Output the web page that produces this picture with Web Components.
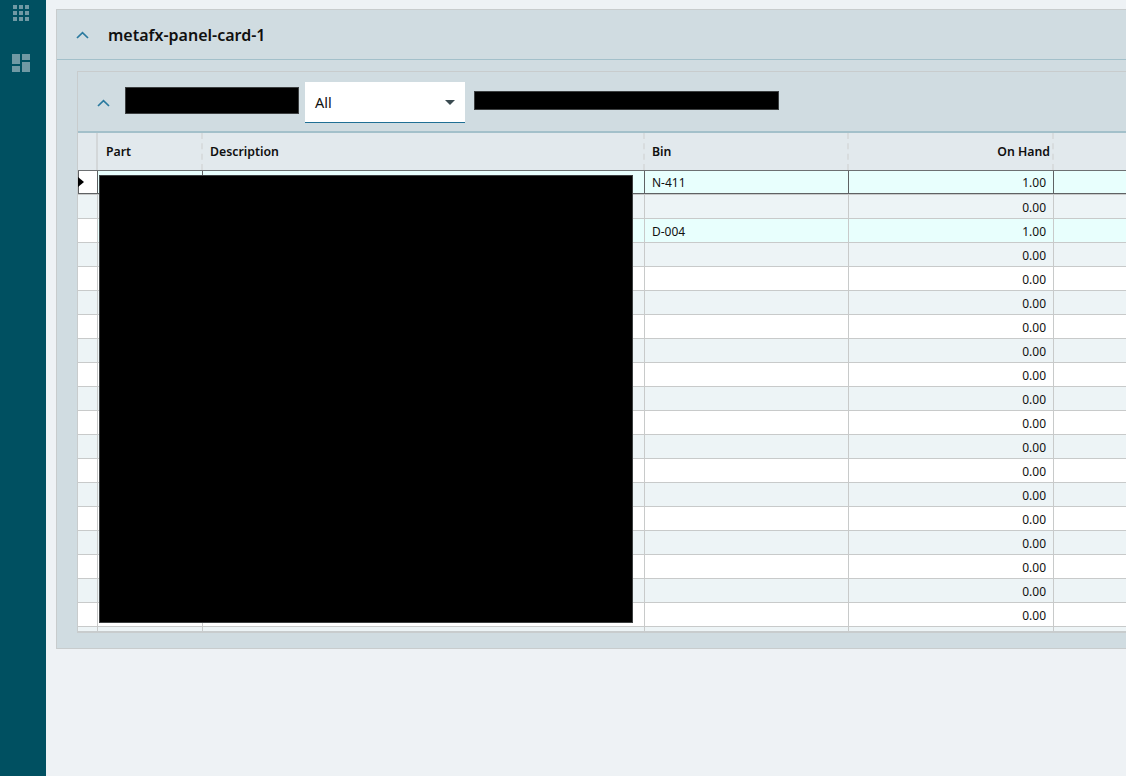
<!DOCTYPE html>
<html>
<head>
<meta charset="utf-8">
<title>metafx</title>
<style>
  html, body { margin: 0; height: 100%; overflow: hidden; background: #eef2f5; }
  body { font-family: "Noto Sans", sans-serif; color: #101010; }
</style>
</head>
<body>
<app-shell>
  <panel-card title="metafx-panel-card-1">
    <part-search>
      <part-grid></part-grid>
    </part-search>
  </panel-card>
</app-shell>

<script>
class AppShell extends HTMLElement {
  constructor() {
    super();
    this.attachShadow({ mode: "open" });
  }
  connectedCallback() {
    this.shadowRoot.innerHTML = `
    <style>
      :host { display: flex; width: 1126px; height: 776px; overflow: hidden; }
      nav { flex: none; width: 46px; background: #005061; padding: 5px 0 0 12px; box-sizing: border-box; }
      svg { display: block; fill: #7099a4; }
      .apps { margin-left: 1px; }
      .dash { margin-top: 33px; }
      main { flex: 1; min-width: 0; padding: 9px 0 0 10px; overflow: hidden; }
    </style>
    <nav>
      <svg class="apps" width="16" height="16" viewBox="0 0 16 16">
        <rect x="0" y="0" width="4" height="4"/><rect x="6" y="0" width="4" height="4"/><rect x="12" y="0" width="4" height="4"/>
        <rect x="0" y="6" width="4" height="4"/><rect x="6" y="6" width="4" height="4"/><rect x="12" y="6" width="4" height="4"/>
        <rect x="0" y="12" width="4" height="4"/><rect x="6" y="12" width="4" height="4"/><rect x="12" y="12" width="4" height="4"/>
      </svg>
      <svg class="dash" width="18" height="18" viewBox="0 0 18 18">
        <rect x="0" y="0" width="8" height="10"/><rect x="10" y="0" width="8" height="6"/>
        <rect x="0" y="12" width="8" height="6"/><rect x="10" y="8" width="8" height="10"/>
      </svg>
    </nav>
    <main><slot></slot></main>`;
  }
}

class PanelCard extends HTMLElement {
  constructor() {
    super();
    this.attachShadow({ mode: "open" });
  }
  connectedCallback() {
    this.shadowRoot.innerHTML = `
    <style>
      :host { display: block; width: 1200px; background: #d0dce1; border: 1px solid #c8cccd; box-sizing: border-box; }
      header { height: 49px; display: flex; align-items: center; border-bottom: 1px solid #a3c0ca; box-sizing: content-box; }
      svg { margin-left: 19px; width: 13px; height: 8px; fill: none; stroke: #2a7a9f; stroke-width: 1.7; }
      h2 { margin: 0 0 0 19px; font-size: 16px; font-weight: 600; }
      .body { padding: 11px 0 15px 20px; }
    </style>
    <header>
      <svg viewBox="0 0 13 8"><path d="M1 7 L6.5 1.6 L12 7"/></svg>
      <h2>${this.getAttribute("title")}</h2>
    </header>
    <div class="body"><slot></slot></div>`;
  }
}

class PartSearch extends HTMLElement {
  constructor() {
    super();
    this.attachShadow({ mode: "open" });
  }
  connectedCallback() {
    this.shadowRoot.innerHTML = `
    <style>
      :host { display: block; border: 1px solid #c8cccd; border-bottom-width: 2px; border-right: 0; }
      header { display: flex; align-items: center; border-bottom: 2px solid #a3c0ca; box-sizing: border-box; height: 61px; }
      svg { margin: 2px 0 0 19px; width: 13px; height: 8px; fill: none; stroke: #2a7a9f; stroke-width: 1.7; flex: none; }
      .mask { background: #000; flex: none; box-sizing: border-box; border: 1px solid #3c3f40; }
      .label { width: 174px; height: 27px; margin: -3px 0 0 15px; }
      .note { width: 305px; height: 19px; margin: -2px 0 0 9px; }
      .select { flex: none; width: 160px; height: 41px; margin: 2px 0 0 6px; background: #fff; border-bottom: 1px solid #1f6f94; box-sizing: border-box; display: flex; align-items: center; padding: 0 10px; justify-content: space-between; font-size: 14.5px; }
      .arrow { width: 0; height: 0; border-left: 5px solid transparent; border-right: 5px solid transparent; border-top: 5px solid #3a4a50; }
    </style>
    <header>
      <svg viewBox="0 0 13 8"><path d="M1 7 L6.5 1.6 L12 7"/></svg>
      <div class="mask label"></div>
      <div class="select"><span>All</span><span class="arrow"></span></div>
      <div class="mask note"></div>
    </header>
    <slot></slot>`;
  }
}

class PartGrid extends HTMLElement {
  constructor() {
    super();
    this.attachShadow({ mode: "open" });
  }
  getStyles() {
    return `
      :host { display: block; position: relative; height: 498px; overflow: hidden; font-size: 12px; background: #fff; }
      .row { display: grid; grid-template-columns: 20px 105px 442px 204px 205px 200px; box-sizing: border-box; }
      .cell { box-sizing: border-box; border-right: 1px solid #c8caca; padding: 0 7px; display: flex; align-items: center; white-space: nowrap; }
      .head { height: 38px; background: #e2e9ed; border-bottom: 1px solid #6d7072; font-weight: 600; font-size: 12.3px; }
      .head .cell { border-right: 2px dashed #d8dcde; }
      .head .cell:first-child { border-right: 2px solid #d3d7d9; }
      .head .cell:nth-child(2) { padding-left: 8px; }
      .data { height: 24px; border-bottom: 1px solid #c8caca; }
      .data .cell { padding-top: 1px; }
      .even { background: #edf4f6; }
      .odd { background: #fff; }
      .stock { background: #e8fffd; }
      .num { justify-content: flex-end; padding-right: 7px; }
      .head .num { padding-right: 2px; }
      .gutter { padding: 0; }
      .stock .gutter { background: #fff; }
      .current .cell { border-bottom: 1px solid #5f6264; border-right-color: #5f6264; }
      .current .cell:last-child { border-right-color: #c8caca; }
      .current .gutter { border-left: 1px solid #5f6264; position: relative; }
      .current .gutter::after { content: ""; position: absolute; left: -1px; top: 6px; border-left: 6px solid #000; border-top: 5px solid transparent; border-bottom: 5px solid transparent; }
      .redact { position: absolute; left: 21px; top: 42px; width: 534px; height: 448px; box-sizing: border-box; background: #000; border: 1px solid #3c3f40; }
    `;
  }
  row(i, bin, qty) {
    const cls = i === 0 ? "stock current" : qty > 0 ? "stock" : i % 2 ? "even" : "odd";
    return `
      <div class="row data ${cls}">
        <div class="cell gutter"></div>
        <div class="cell"></div>
        <div class="cell"></div>
        <div class="cell">${bin}</div>
        <div class="cell num">${qty.toFixed(2)}</div>
        <div class="cell"></div>
      </div>`;
  }
  connectedCallback() {
    const rows = [];
    for (let i = 0; i < 19; i++) {
      rows.push(this.row(i, i === 0 ? "N-411" : i === 2 ? "D-004" : "", i === 0 || i === 2 ? 1 : 0));
    }
    rows.push(`<div class="row even" style="height:4px">
      <div class="cell gutter"></div><div class="cell"></div><div class="cell"></div><div class="cell"></div><div class="cell"></div><div class="cell"></div>
    </div>`);
    this.shadowRoot.innerHTML = `
    <style>${this.getStyles()}</style>
    <div class="row head">
      <div class="cell"></div>
      <div class="cell">Part</div>
      <div class="cell">Description</div>
      <div class="cell">Bin</div>
      <div class="cell num">On Hand</div>
      <div class="cell"></div>
    </div>
    ${rows.join("")}
    <div class="redact"></div>`;
  }
}

customElements.define("app-shell", AppShell);
customElements.define("panel-card", PanelCard);
customElements.define("part-search", PartSearch);
customElements.define("part-grid", PartGrid);
</script>
</body>
</html>
